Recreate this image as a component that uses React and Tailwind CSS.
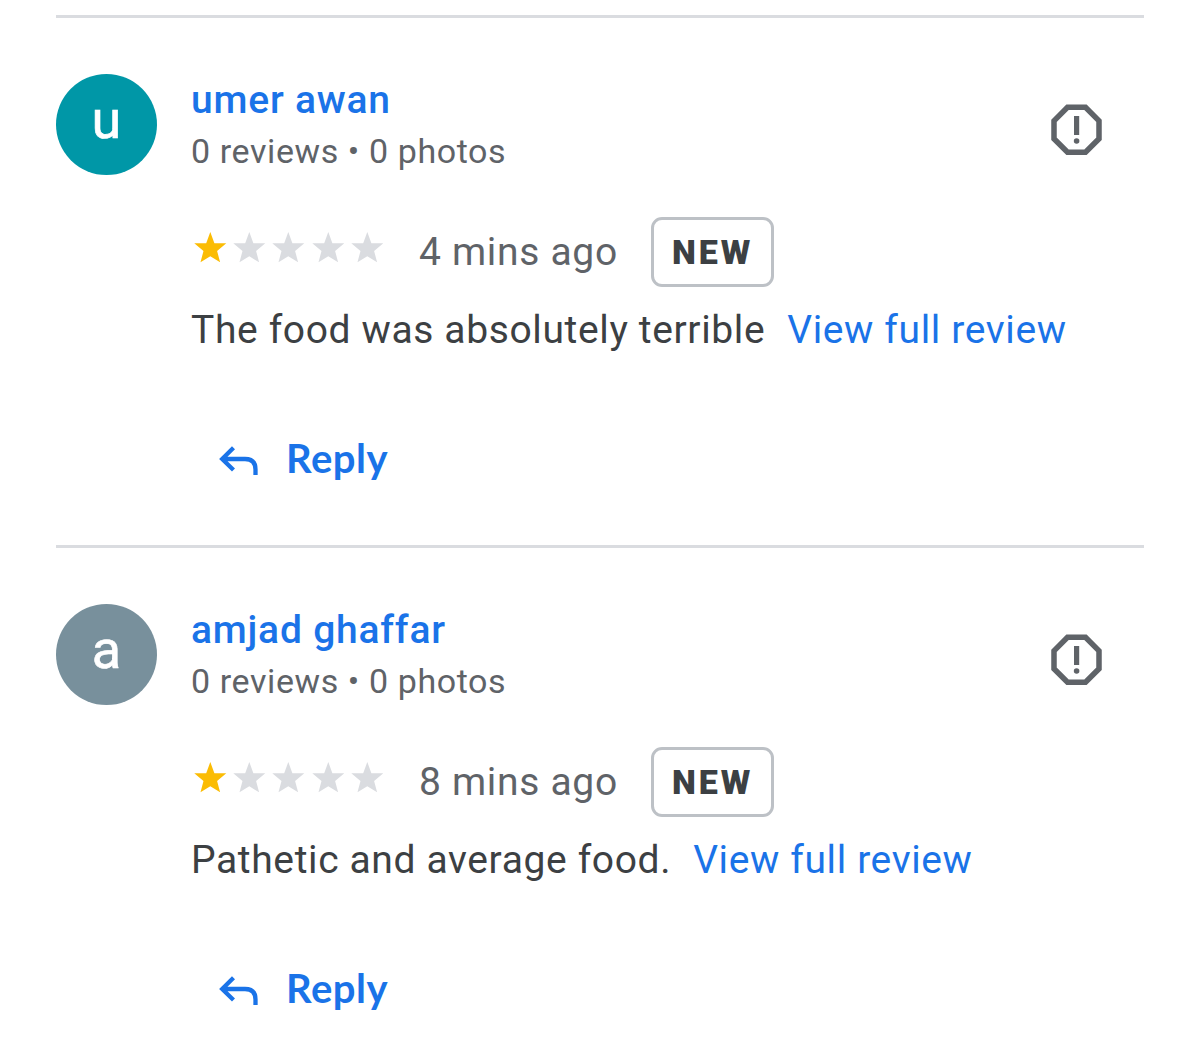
function Star({ on }) {
  return (
    <svg viewBox="0 0 33.6 32" className={on ? "h-[32px] w-[33.6px] fill-[#fbbc04]" : "h-[32px] w-[33.6px] fill-[#dadce0]"}>
      <path d="M17.3 0 21.4 11.3 33.3 11.3 24.1 18.9 27.1 30.3 17.3 24.3 7.5 30.3 10.5 18.9 1.3 11.3 13.2 11.3z" />
    </svg>
  );
}

function Review({ name, initial, color, time, text }) {
  return (
    <section className="flex h-[530px] border-t-[3px] border-[#dadce0] pt-[56px]">
      <div className={`flex h-[101px] w-[101px] shrink-0 items-center justify-center rounded-full text-[54px] leading-none text-white [-webkit-text-stroke:0.6px_white] ${color}`}>
        <span className="-mt-[9px]">{initial}</span>
      </div>
      <div className="ml-[34px] flex-1 whitespace-nowrap">
        <div className="flex h-[143px] justify-between">
          <div>
            <h2 className="mt-[3px] text-[39px] font-medium leading-[46px] tracking-[0.78px] text-[#1a73e8]">{name}</h2>
            <p className="mt-[8px] text-[34px] leading-[40px] tracking-[0.6px] text-[#5f6368]">0 reviews • 0 photos</p>
          </div>
          <svg viewBox="0 0 52 52" className="mr-[41px] mt-[30px] h-[52px] w-[52px]">
            <path d="M16.5 3.3h18L48 16.8v18L34.5 48.3h-18L3 34.8v-18z" fill="none" stroke="#5f6368" strokeWidth="5.5" />
            <path d="M23 12h5.2v19h-5.2z" fill="#5f6368" />
            <circle cx="25.6" cy="37" r="2.8" fill="#5f6368" />
          </svg>
        </div>
        <div className="flex h-[70px] items-center">
          <div className="-mt-[8px] ml-[2px] flex gap-[5.6px]">
            <Star on /><Star /><Star /><Star /><Star />
          </div>
          <span className="ml-[35.6px] w-[198px] text-[39px] leading-[46px] tracking-[0.7px] text-[#5f6368]">{time}</span>
          <span className="ml-[34.4px] flex h-[70px] w-[122.6px] items-center justify-center rounded-[11px] border-[3px] border-[#bdc1c6] pt-[1px] text-[34px] font-black tracking-[3px] text-[#3c4043]">NEW</span>
        </div>
        <div className="mt-[20px] flex gap-[22px] text-[39px] leading-[46px] tracking-[0.63px] text-[#3c4043]">
          <span>{text}</span>
          <a className="text-[#1a73e8]">View full review</a>
        </div>
        <button className="ml-[28px] mt-[83px] flex h-[46px] items-center text-[40px] font-bold leading-[46px] text-[#1a73e8]">
          <svg viewBox="0 0 40 32" className="mt-[4px] h-[32px] w-[40px]" fill="none" stroke="currentColor" strokeWidth="4.3">
            <path d="M14.5 2.8 3.2 14l11.3 11M3.2 14h22.8q10.5 0 10.5 10.5v5.5" />
          </svg>
          <span className="-mt-[3px] ml-[27px] font-['Lato',sans-serif] tracking-[0.5px]">Reply</span>
        </button>
      </div>
    </section>
  );
}

export default function App() {
  return (
    <main className="h-[1059px] overflow-hidden bg-white px-[56px] pt-[15px] font-['Roboto',sans-serif]">
      <Review name="umer awan" initial="u" color="bg-[#0097a7]" time="4 mins ago" text="The food was absolutely terrible" />
      <Review name="amjad ghaffar" initial="a" color="bg-[#78909c]" time="8 mins ago" text="Pathetic and average food." />
    </main>
  );
}
